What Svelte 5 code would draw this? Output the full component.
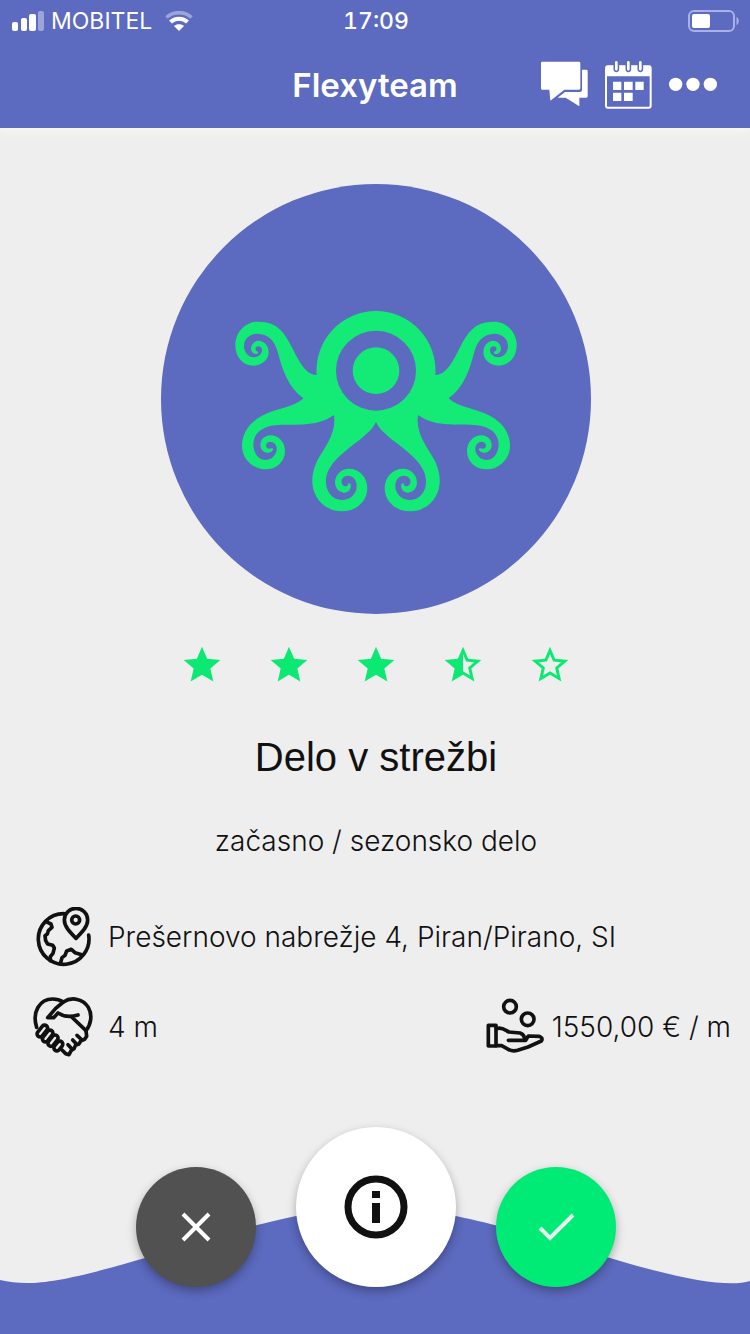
<script>
  const STAR = 'M12 17.27L18.18 21l-1.64-7.03L22 9.24l-7.19-.61L12 2 9.19 8.63 2 9.24l5.46 4.73L5.82 21z';
  const STAR_HALF = 'M22 9.24l-7.19-.62L12 2 9.19 8.63 2 9.24l5.46 4.73L5.82 21 12 17.27 18.18 21l-1.63-7.03L22 9.24zM12 15.4V6.1l1.71 4.04 4.38.38-3.32 2.88 1 4.28L12 15.4z';
  const STAR_EMPTY = 'M22 9.24l-7.19-.62L12 2 9.19 8.63 2 9.24l5.46 4.73L5.82 21 12 17.27 18.18 21l-1.63-7.03L22 9.24zM12 15.4l-3.76 2.27 1-4.28-3.32-2.88 4.38-.38L12 6.1l1.71 4.04 4.38.38-3.32 2.88 1 4.28L12 15.4z';
  const stars = [STAR, STAR, STAR, STAR_HALF, STAR_EMPTY];

  // One half of the octopus; the other half is mirrored around x = 453.
  const HALF =
    'M455 33H453A178 179 0 0 0 275 225C245 225 225 190 205 150C180 100 160 65 100 65' +
    'C60 65 31 98 31 135C31 172 55 197 85 197C112 197 131 178 131 157C131 137 117 122 101 122' +
    'C88 122 78 133 78 146C78 157 88 164 98 161L100 155C93 154 90 148 92 144C95 136 106 137 110 145' +
    'C115 158 103 172 86 172C69 171 57 156 57 138C57 116 75 101 98 101C128 102 148 120 158 155' +
    'C172 210 190 262 235 295C200 330 130 322 80 370C60 390 51 415 51 437C51 478 85 508 122 508' +
    'C156 508 180 484 180 453C180 426 160 406 137 406C119 406 106 419 106 435C106 450 118 460 131 458' +
    'C138 457 143 454 145 448L141 444C131 449 122 444 123 436C125 426 135 423 143 427C157 434 158 450 151 462' +
    'C142 479 122 484 106 476C92 467 85 450 85 432C86 400 112 380 150 376C200 370 270 385 327 345' +
    'C335 400 300 440 275 485C264 510 261 530 262 550C265 600 305 634 350 634C395 634 427 604 427 565' +
    'C427 530 402 506 373 506C349 506 330 524 330 547C330 565 343 578 358 578C371 578 380 566 377 552' +
    'L370 548C371 558 363 561 356 557C344 549 349 529 368 527C386 527 396 542 395 560' +
    'C394 583 375 600 350 600C322 599 303 575 303 545C303 500 340 470 390 430C425 403 445 385 453 365L455 365Z';
</script>

<div class="screen">
  <header>
    <div class="status">
      <div class="carrier">
        <svg width="32" height="20" viewBox="0 0 32 20" fill="#fff" aria-hidden="true">
          <rect x="0" y="11" width="6" height="9" rx="2" />
          <rect x="9" y="7" width="6" height="13" rx="2" />
          <rect x="17" y="3" width="7" height="17" rx="2" />
          <rect x="26" y="0" width="6" height="20" rx="2" opacity=".4" />
        </svg>
        <span>MOBITEL</span>
        <svg class="wifi" width="28" height="20" viewBox="0 0 28 20" fill="none" stroke="#fff" aria-hidden="true">
          <path d="M1.5 6.5C8 0 20 0 26.500 6.500" stroke-width="3.500" opacity=".4" />
          <path d="M5.500 11C10 6.500 18 6.500 22.500 11" stroke-width="4" />
          <path d="M9 15C11.500 12.500 16.500 12.500 19 15L14 20Z" fill="#fff" stroke="none" />
        </svg>
      </div>
      <time>17:09</time>
      <svg class="battery" width="52" height="22" viewBox="0 0 52 22" aria-hidden="true">
        <rect x="1" y="1" width="45" height="20" rx="5" fill="none" stroke="#a9b1e6" stroke-width="2" />
        <rect x="4" y="4" width="18" height="14" rx="2" fill="#fff" />
        <path d="M48.500 7C51.500 8 51.500 14 48.500 15Z" fill="#a9b1e6" />
      </svg>
    </div>
    <nav>
      <h1>Flexyteam</h1>
      <div class="tools">
        <button aria-label="Messages">
          <svg width="48" height="48" viewBox="0 0 144 144" fill="#fff">
            <path d="M3 2H114Q118 2 118 6V82Q118 86 114 86H70L28 119L25 86H3Q0 86 0 82V6Q0 2 3 2Z" />
            <path d="M123 26H136Q140 26 140 30V106Q140 110 136 110H115V136L74 110H50L72 93H117Q123 93 123 87Z" />
          </svg>
        </button>
        <button aria-label="Calendar">
          <svg width="48" height="48" viewBox="0 0 144 144" fill="#fff">
            <rect x="3" y="16" width="134" height="124" rx="6" fill="none" stroke="#fff" stroke-width="6" />
            <path d="M3 14H137V46H3Z" />
            <g stroke="#5c6abf" stroke-width="17" stroke-linecap="round"><path d="M34 12V25M70 12V25M106 12V25" /></g>
            <g stroke="#fff" stroke-width="8" stroke-linecap="round"><path d="M34 4V25M70 4V25M106 4V25" /></g>
            <path d="M24 62H49V87H24ZM57 62H83V87H57ZM91 62H116V87H91ZM24 95H49V120H24ZM57 95H83V120H57Z" />
          </svg>
        </button>
        <button aria-label="More">
          <svg width="48" height="48" viewBox="0 0 144 144" fill="#fff">
            <circle cx="20" cy="70" r="20" /><circle cx="72" cy="70" r="20" /><circle cx="124" cy="70" r="20" />
          </svg>
        </button>
      </div>
    </nav>
  </header>

  <main>
    <div class="avatar">
      <svg width="302" height="220" viewBox="0 0 906 660" aria-hidden="true">
        <g fill="#13eb76">
          <path d={HALF} />
          <path d={HALF} transform="translate(906 0) scale(-1 1)" />
        </g>
        <circle cx="453" cy="212" r="120" fill="#5c6abf" />
        <circle cx="453" cy="212" r="70" fill="#13eb76" />
      </svg>
    </div>

    <div class="stars" role="img" aria-label="3.5 / 5">
      {#each stars as d}
        <svg width="44" height="44" viewBox="0 0 24 24" fill="#0ce973"><path {d} /></svg>
      {/each}
    </div>

    <h2>Delo v strežbi</h2>
    <p class="kind">začasno / sezonsko delo</p>

    <div class="facts">
      <div class="fact">
        <svg class="line" width="60" height="60" viewBox="39 36 180 180" aria-hidden="true">
          <path d="M132 56A76 76 0 1 0 206 120" />
          <path d="M168 130C150 112 133 95 133 75A34 34 0 0 1 203 75C203 95 186 112 168 130Z" />
          <circle cx="167" cy="75" r="12" />
          <path d="M78 80L93 87L96 97L85 107L82 117L75 122L77 137L83 147L98 151L103 159L99 175L91 185V197" />
          <path d="M121 206L126 188L135 181L140 168L154 163L165 173L188 180" />
        </svg>
        <span>Prešernovo nabrežje 4, Piran/Pirano, SI</span>
      </div>
      <div class="row">
        <div class="fact">
          <svg class="line" width="60" height="60" viewBox="39 306 180 180" aria-hidden="true">
            <path d="M50 397C35 350 60 312 98 312C112 312 122 316 130 321C156 304 190 312 205 337C218 360 213 388 198 407" />
            <path d="M130 321L107 340L83 368H101L114 354C132 366 150 367 174 360M155 366L198 407L200 424L194 433L183 437L176 448L167 450L162 461L154 466L147 479L137 476L126 465" />
            <path d="M171 421L186 435M158 435L170 448M144 449L156 462" />
            <g>
              <rect x="-9" y="-20" width="18" height="40" rx="9" transform="translate(67 408) rotate(38)" />
              <rect x="-9" y="-20" width="18" height="40" rx="9" transform="translate(83 423) rotate(38)" />
              <rect x="-9" y="-19" width="18" height="38" rx="9" transform="translate(99 437) rotate(38)" />
              <rect x="-9" y="-16" width="18" height="32" rx="9" transform="translate(115 453) rotate(38)" />
            </g>
          </svg>
          <span>4 m</span>
        </div>
        <div class="fact pay">
          <svg class="line" width="60" height="60" viewBox="48 54 180 180" aria-hidden="true">
            <circle cx="123" cy="83" r="19" />
            <circle cx="176" cy="121" r="19" />
            <path d="M58 139H81V201H58Z" />
            <path d="M82 149C99 143 108 153 120 159L153 162Q164 166 166 176M118 184H170L178 171L211 172Q223 177 217 186L177 204L146 214Q130 218 118 211L98 200H82" />
          </svg>
          <span>1550,00 € / m</span>
        </div>
      </div>
    </div>
  </main>

  <footer>
    <svg class="wave" viewBox="0 0 750 134" preserveAspectRatio="none" aria-hidden="true">
      <path d="M0 80C30 87 60 83 145 58C190 46 225 31 296 16C350 4 402 4 456 16C527 31 562 46 610 58C680 79 728 88 750 81V134H0Z" fill="#5c6abf" />
    </svg>
    <div class="actions">
      <button class="round reject" aria-label="Reject">
        <svg width="32" height="32" viewBox="0 0 32 32" fill="none" stroke="#fff" stroke-width="4"><path d="M3 3L29 29M29 3L3 29" /></svg>
      </button>
      <button class="round info" aria-label="Information">
        <svg width="64" height="64" viewBox="0 0 64 64" fill="#111"><circle cx="32" cy="32" r="28" fill="none" stroke="#111" stroke-width="7" /><path d="M28 16H36V23H28ZM28 28H36V48H28Z" /></svg>
      </button>
      <button class="round accept" aria-label="Accept">
        <svg width="38" height="32" viewBox="0 0 38 32" fill="none" stroke="#e9fff2" stroke-width="4"><path d="M3 17L13 27L36 4" /></svg>
      </button>
    </div>
  </footer>
</div>

<style>
  :global(body) { margin: 0; background: #eee; }
  .screen {
    min-height: 100vh;
    display: flex;
    flex-direction: column;
    background: #eee;
    color: #111;
    font-family: Inter, "Liberation Sans", sans-serif;
  }
  svg { display: block; flex: none; }
  h1, h2, p { margin: 0; }
  button { border: 0; padding: 0; background: none; cursor: pointer; }

  header { background: #5c6abf; color: #fff; box-shadow: 0 4px 8px #f8f8f4; }
  .status {
    display: grid;
    grid-template-columns: 1fr auto 1fr;
    align-items: center;
    height: 42px;
    padding: 0 10px 0 12px;
    font-size: 23px;
  }
  .carrier { display: flex; align-items: center; gap: 7px; }
  .wifi { margin-left: 6px; }
  time { font-weight: 500; font-variant-numeric: tabular-nums; }
  .battery { justify-self: end; }
  nav {
    display: grid;
    grid-template-columns: 1fr auto 1fr;
    align-items: center;
    height: 86px;
    padding: 0 33px;
  }
  h1 { grid-column: 2; font-size: 33px; font-weight: 600; line-height: 40px; }
  .tools { display: flex; justify-content: flex-end; gap: 16px; }

  main { display: flex; flex-direction: column; align-items: center; padding: 56px 0 0 2px; }
  .avatar {
    display: flex;
    justify-content: center;
    align-items: flex-end;
    box-sizing: border-box;
    width: 430px;
    height: 430px;
    padding-bottom: 94px;
    border-radius: 50%;
    background: #5c6abf;
  }
  .stars { display: flex; gap: 43px; margin-top: 29px; }
  h2 { margin-top: 46px; font: 400 40px/48px "Liberation Sans", Arial, sans-serif; }
  .kind { margin-top: 42px; font-size: 28px; font-weight: 300; line-height: 36px; }
  .facts {
    align-self: stretch;
    display: flex;
    flex-direction: column;
    gap: 30px;
    margin-top: 48px;
    padding: 0 19px 0 31px;
    font-size: 28px;
    font-weight: 300;
  }
  .row { display: flex; justify-content: space-between; }
  .fact { display: flex; align-items: center; gap: 15px; }
  .pay { gap: 7px; }
  .line { fill: none; stroke: #111; stroke-width: 11; stroke-linejoin: round; stroke-linecap: round; }

  footer { display: grid; margin-top: auto; }
  footer > * { grid-area: 1 / 1; }
  .wave { align-self: end; width: 100%; height: 134px; }
  .actions {
    display: flex;
    justify-content: center;
    align-items: flex-end;
    gap: 40px;
    padding: 0 0 47px 2px;
    z-index: 1;
  }
  .round {
    display: flex;
    justify-content: center;
    align-items: center;
    width: 120px;
    height: 120px;
    border-radius: 50%;
    box-shadow: 0 4px 10px rgba(0, 0, 0, 0.3);
  }
  .reject { background: #515151; }
  .info { width: 160px; height: 160px; background: #fff; }
  .accept { background: #00eb75; }
</style>
